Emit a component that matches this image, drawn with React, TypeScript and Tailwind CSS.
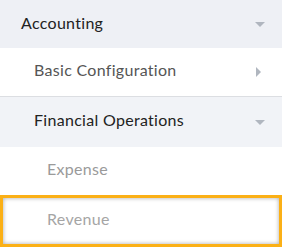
import React from "react";

const Down = ({ offset }: { offset: string }) => (
  <svg width="10" height="6" viewBox="0 0 10 6" className={`shrink-0 ${offset}`}>
    <path d="M0 0 L10 0 L5 5 Z" fill="#b0b6bf" />
  </svg>
);

const Right = () => (
  <svg width="6" height="10" viewBox="0 0 6 10" className="shrink-0 mt-[4px]">
    <path d="M0 0 L5 5 L0 10 Z" fill="#b0b6bf" />
  </svg>
);

export default function App() {
  return (
    <div
      className="w-[282px] h-[248px] bg-white overflow-hidden text-[16px] tracking-[0.3px]"
      style={{ fontFamily: "Lato, 'Open Sans', sans-serif" }}
    >
      <div className="h-[48px] bg-[#eef0f5] flex items-center justify-between pl-[21px] pr-[17px] pb-[3px] text-[#222]">
        <span>Accounting</span>
        <Down offset="mt-[4px]" />
      </div>
      <div className="h-[49px] border-b border-[#dcdee2] flex items-center justify-between pl-[34px] pr-[20px] pb-[4px] text-[#555]">
        <span>Basic Configuration</span>
        <Right />
      </div>
      <div className="h-[50px] bg-[#f1f3f7] flex items-center justify-between pl-[34px] pr-[17px] pb-[5px] text-[#222]">
        <span>Financial Operations</span>
        <Down offset="mt-[7px]" />
      </div>
      <div className="h-[48px] flex items-center pl-[47px] pb-[4px] text-[#9a9a9a]">
        <span>Expense</span>
      </div>
      <div className="h-[52px] w-[282px] border-[3px] border-[#fbb016] shadow-[inset_0_0_4px_rgba(0,0,0,0.35)] flex items-center pl-[44px] pb-[4px] text-[#a5a5a5]">
        <span>Revenue</span>
      </div>
    </div>
  );
}
